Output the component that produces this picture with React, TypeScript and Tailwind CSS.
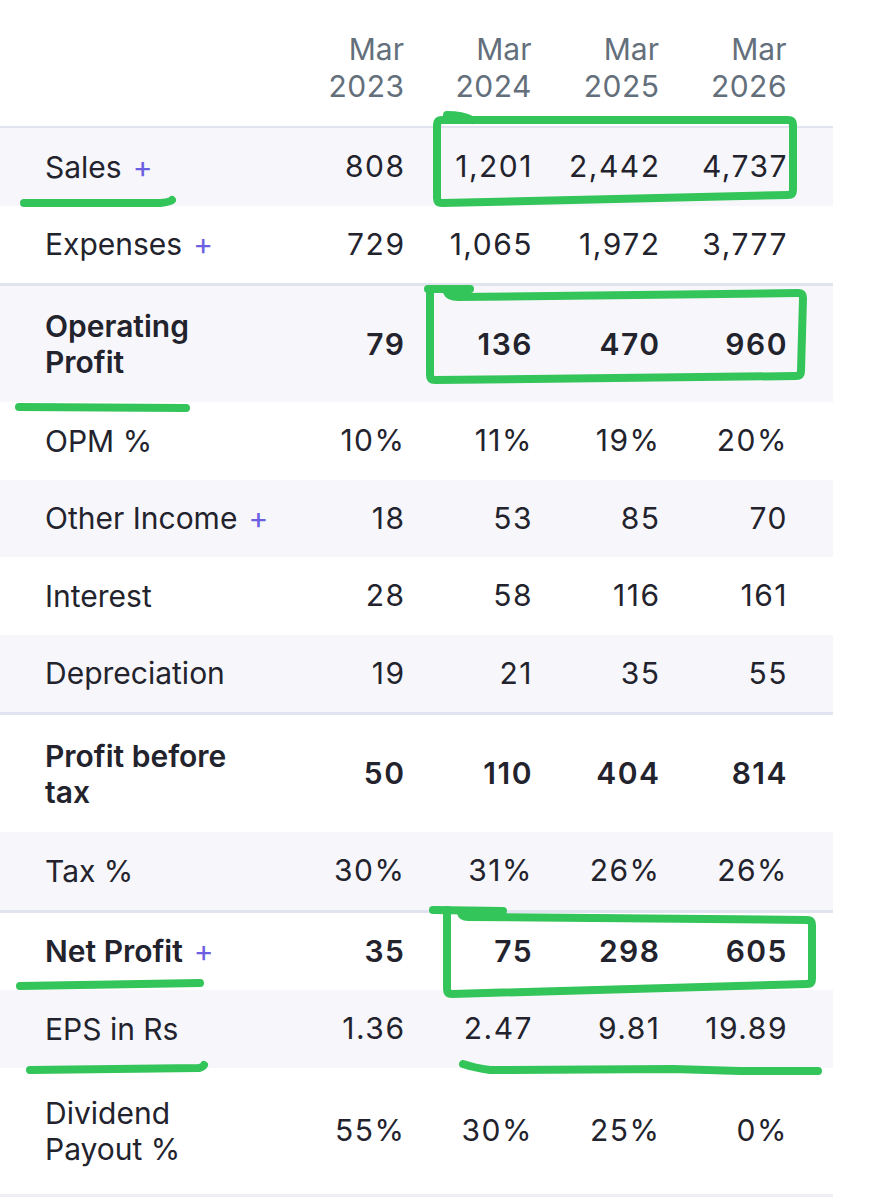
import React from 'react';

type Row = {
  label: string[];
  values: string[];
  plus?: boolean;
  bold?: boolean;
  shaded?: boolean;
  height: string;
  borderTop?: boolean;
  borderBottom?: boolean;
};

const rows: Row[] = [
  { label: ['Sales'], values: ['808', '1,201', '2,442', '4,737'], plus: true, shaded: true, height: 'h-[77.5px]' },
  { label: ['Expenses'], values: ['729', '1,065', '1,972', '3,777'], plus: true, height: 'h-[77.5px]' },
  { label: ['Operating', 'Profit'], values: ['79', '136', '470', '960'], bold: true, shaded: true, height: 'h-[119px]', borderTop: true },
  { label: ['OPM %'], values: ['10%', '11%', '19%', '20%'], height: 'h-[77.5px]' },
  { label: ['Other Income'], values: ['18', '53', '85', '70'], plus: true, shaded: true, height: 'h-[77.5px]' },
  { label: ['Interest'], values: ['28', '58', '116', '161'], height: 'h-[77.5px]' },
  { label: ['Depreciation'], values: ['19', '21', '35', '55'], shaded: true, height: 'h-[77.5px]' },
  { label: ['Profit before', 'tax'], values: ['50', '110', '404', '814'], bold: true, height: 'h-[120px]', borderTop: true },
  { label: ['Tax %'], values: ['30%', '31%', '26%', '26%'], shaded: true, height: 'h-[77.5px]' },
  { label: ['Net Profit'], values: ['35', '75', '298', '605'], plus: true, bold: true, height: 'h-[80.5px]', borderTop: true },
  { label: ['EPS in Rs'], values: ['1.36', '2.47', '9.81', '19.89'], shaded: true, height: 'h-[77.5px]' },
  { label: ['Dividend', 'Payout %'], values: ['55%', '30%', '25%', '0%'], height: 'h-[129.5px]', borderBottom: true },
];

const years = ['2023', '2024', '2025', '2026'];

function TableRow({ row }: { row: Row }) {
  return (
    <div
      className={`flex items-center ${row.height} ${row.shaded ? 'bg-[#f7f7fb]' : 'bg-white'} ${
        row.borderTop ? 'border-t-[3px] border-[#e1e3ee]' : ''
      } ${row.borderBottom ? 'border-b-[3px] border-[#eeeff4]' : ''} ${
        row.bold ? 'font-semibold' : 'font-normal'
      }`}
    >
      <div className="w-[276.5px] pl-[45px] leading-[36px] text-[#23232d]">
        {row.label.map((l, i) => (
          <div key={i}>
            {l}
            {row.plus && i === row.label.length - 1 && (
              <span className="ml-[11px] font-normal text-[#6c5fe2]">+</span>
            )}
          </div>
        ))}
      </div>
      {row.values.map((v, i) => (
        <div key={i} className="w-[127.5px] text-right text-[#23232d]">
          <span className="tracking-[1.5px] mr-[-1.5px]">{v}</span>
        </div>
      ))}
    </div>
  );
}

export default function App() {
  return (
    <div
      className="relative w-[869px] h-[1200px] bg-white overflow-hidden text-[30px]"
      style={{ fontFamily: 'Inter, "Noto Sans", sans-serif' }}
    >
      <div className="w-[833px]">
        {/* HEADER */}
        <div className="flex h-[128px] pt-[31px] border-b-2 border-[#e1e3ee] text-[#646f7c] leading-[37px]">
          <div className="w-[276.5px]" />
          {years.map((y) => (
            <div key={y} className="w-[127.5px] text-right">
              <div>Mar</div>
              <div className="tracking-[0.5px] mr-[-0.5px]">{y}</div>
            </div>
          ))}
        </div>

        {rows.map((row) => (
          <TableRow key={row.label.join(' ')} row={row} />
        ))}
      </div>

      {/* hand drawn highlights */}
      <svg
        className="absolute left-0 top-0 pointer-events-none"
        width="869"
        height="1200"
        viewBox="0 0 869 1200"
        fill="none"
        stroke="#33c45a"
        strokeWidth="8"
        strokeLinecap="round"
        strokeLinejoin="round"
      >
        {/* sales */}
        <path d="M24 203 L160 203 Q170 202 172 200" />
        <path d="M437 198 L437 125 Q437 120 442 120 L788 120 Q793 120 793 125 L793 190 Q793 195 788 195 L442 203 Q437 203 437 198 Z" />
        <path d="M447 115 Q462 115 472 120" />

        {/* operating profit */}
        <path d="M430 290 L430 375 Q430 380 435 380 L796 376 Q801 376 801 371 L803 298 Q803 293 798 293 L458 297 Q449 297 447 292" />
        <path d="M428 289 L470 289" />
        <path d="M19 407 L186 408" />

        {/* net profit */}
        <path d="M433 910 L503 911" />
        <path d="M447 910 L447 989 Q447 994 452 994 L807 984 Q812 984 812 979 L812 925 Q812 920 807 920 L468 917 Q462 917 461 913" />
        <path d="M20 986 L200 983" />

        {/* eps */}
        <path d="M30 1070 L199 1068 Q203 1067 204 1065" />
        <path d="M463 1064 Q475 1068 490 1070 L673 1069 L740 1071 L818 1071" />
      </svg>
    </div>
  );
}
